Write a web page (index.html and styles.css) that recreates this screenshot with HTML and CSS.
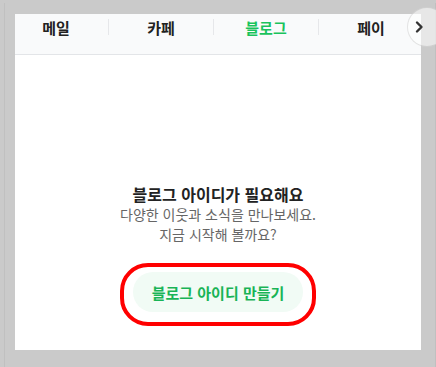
FILE: index.html
```html
<!DOCTYPE html>
<html lang="ko">
<head>
    <meta charset="UTF-8">
    <meta name="viewport" content="width=device-width, initial-scale=1.0">
    <title>블로그</title>
    <link rel="stylesheet" href="styles.css">
</head>
<body>
    <div class="frame">
        <div class="shell">
            <div class="panel">
                <div class="tabs">
                    <div class="tab-list">
                        <a class="tab">메일</a>
                        <span class="divider"></span>
                        <a class="tab">카페</a>
                        <span class="divider"></span>
                        <a class="tab active">블로그</a>
                        <span class="divider"></span>
                        <a class="tab">페이</a>
                    </div>
                </div>
                <button class="tab-next" aria-label="다음">
                    <svg width="10" height="14" viewBox="0 0 10 14">
                        <path d="M3 2.5 L7.5 7 L3 11.5" fill="none" stroke="#333" stroke-width="2.4" stroke-linecap="round" stroke-linejoin="round"/>
                    </svg>
                </button>
                <div class="content">
                    <h3 class="title">블로그 아이디가 필요해요</h3>
                    <p class="desc">다양한 이웃과 소식을 만나보세요.<br>지금 시작해 볼까요?</p>
                    <div class="btn-wrap">
                        <button class="btn-create">블로그 아이디 만들기</button>
                        <span class="highlight"></span>
                    </div>
                </div>
            </div>
        </div>
    </div>
</body>
</html>
```

FILE: styles.css
```css
body {
    margin: 0;
    padding: 0;
    background-color: #cacaca;
    font-family: 'Noto Sans CJK KR', 'Noto Sans', sans-serif;
    overflow: hidden;
}
.frame {
    height: 367px;
    padding: 3px 0 0 4px;
    box-sizing: border-box;
}
.shell {
    width: 420px;
    height: 364px;
    padding: 11px 0 0 10px;
    border-left: 1px solid #c0c0c0;
    border-right: 1px solid #c0c0c0;
    box-sizing: content-box;
}
.panel {
    position: relative;
    width: 406px;
    height: 336px;
    background: #fff;
}
.tabs {
    height: 40px;
    background-color: #f9fafb;
    border-bottom: 1px solid #e3e5e8;
    overflow: hidden;
}
.tab-list {
    display: flex;
    margin-left: -11px;
}
.tab {
    flex: 0 0 104px;
    text-align: center;
    font-size: 15px;
    font-weight: 700;
    line-height: 20px;
    padding-top: 4px;
    color: #222;
}
.tab.active {
    color: #19c35c;
}
.divider {
    flex: 0 0 1px;
    height: 16px;
    margin-top: 5px;
    background-color: #e6e7ea;
}
.tab-next {
    position: absolute;
    left: 392px;
    top: -7px;
    width: 40px;
    height: 40px;
    padding: 0 0 0 6px;
    border: 1px solid rgba(0, 0, 0, 0.1);
    border-radius: 50%;
    background: rgba(255, 255, 255, 0.55);
    display: flex;
    align-items: center;
    justify-content: flex-start;
    box-sizing: border-box;
}
.content {
    display: flex;
    flex-direction: column;
    align-items: center;
    padding-top: 129px;
}
.title {
    margin: 0;
    font-size: 16px;
    font-weight: 700;
    line-height: 20px;
    color: #222;
}
.desc {
    margin: 0;
    font-size: 14px;
    line-height: 20px;
    color: #666;
    text-align: center;
}
.btn-wrap {
    position: relative;
    margin-top: 28px;
}
.btn-create {
    display: block;
    width: 170px;
    height: 40px;
    border: none;
    border-radius: 20px;
    background-color: #f1fbf5;
    color: #19b456;
    font-family: inherit;
    font-size: 15px;
    font-weight: 700;
}
.highlight {
    position: absolute;
    left: -13px;
    top: -9px;
    width: 196px;
    height: 63px;
    border: 4px solid #f00;
    border-radius: 28px;
    box-sizing: border-box;
}
```
